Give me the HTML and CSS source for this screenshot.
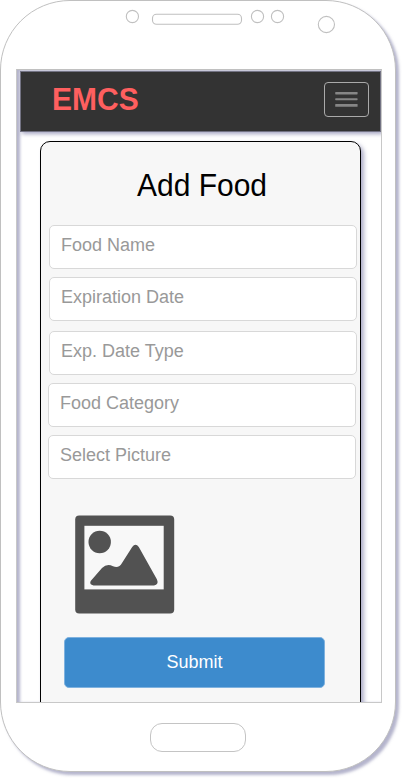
FILE: index.html
```html
<!DOCTYPE html>
<html lang="en">
<head>
<meta charset="utf-8">
<title>EMCS - Add Food</title>
<link rel="stylesheet" href="styles.css">
</head>
<body>
<div class="phone">
  <svg class="sensors" width="394" height="68" viewBox="0 0 394 68" fill="none" stroke="#c0c0c0" stroke-width="1.1" aria-hidden="true">
    <circle cx="131.4" cy="15.5" r="6.1"/>
    <rect x="151.5" y="13.3" width="89" height="10" rx="4"/>
    <circle cx="256.5" cy="15.5" r="6.1"/>
    <circle cx="276.5" cy="15.5" r="6.1"/>
    <circle cx="325.4" cy="23.5" r="8.1"/>
  </svg>
  <main class="screen">
    <nav class="navbar">
      <span class="brand">EMCS</span>
      <button class="toggle" type="button" aria-label="Menu">
        <svg width="24" height="18" viewBox="0 0 24 18" fill="#868686" aria-hidden="true">
          <rect x="0.2" y="0.9" width="22.4" height="2.5" rx="0.6"/>
          <rect x="0.2" y="7.2" width="22.4" height="2" rx="0.6"/>
          <rect x="0.2" y="13" width="22.4" height="2.8" rx="0.6"/>
        </svg>
      </button>
    </nav>
    <form class="card">
      <h1 class="title">Add Food</h1>
      <div class="field">Food Name</div>
      <div class="field">Expiration Date</div>
      <div class="field spaced">Exp. Date Type</div>
      <div class="field shifted">Food Category</div>
      <div class="field shifted">Select Picture</div>
      <svg class="picture" width="100" height="99" viewBox="0 0 100 99" aria-hidden="true">
        <rect x="0.2" y="0.5" width="99" height="98" rx="4" fill="#525252"/>
        <rect x="9.4" y="10.8" width="79.3" height="63.6" fill="#f8f8f8"/>
        <circle cx="24.7" cy="27" r="11.2" fill="#525252"/>
        <path d="M18.5 70.5 Q14 69.5 15.7 66 L27 53 Q32 48 38 51.2 Q44 53.5 47 48 L57.2 32 Q60.5 27.5 63.8 32 L82 64.5 Q84 69.5 79 70.5 Z" fill="#525252"/>
      </svg>
      <button class="submit" type="button">Submit</button>
    </form>
  </main>
  <div class="home"></div>
</div>
</body>
</html>
```
FILE: styles.css
```css
* {
  box-sizing: border-box;
}

body {
  margin: 0;
  min-height: 779px;
  background: #fff;
  font-family: "Liberation Sans", Arial, sans-serif;
}

.phone {
  width: 396px;
  height: 772px;
  border: 1px solid #c0c0c0;
  border-radius: 70px;
  background: #fff;
  box-shadow: 3px 3px 3px rgba(130, 130, 170, 0.6);
}

.sensors {
  display: block;
}

.screen {
  width: 366px;
  height: 634px;
  margin-left: 15px;
  padding: 1px 0 0 3px;
  border: 1px solid #c8c8c8;
  border-top-color: #c0c0c0;
  background: #fff;
  box-shadow: inset 3px 1px 3px rgba(130, 130, 170, 0.6);
  overflow: hidden;
}

.navbar {
  display: flex;
  justify-content: space-between;
  align-items: flex-start;
  width: 361px;
  height: 61px;
  padding: 10px 11px 0 31px;
  border: 1px solid #737383;
  background: #333;
  box-shadow: 2px 2px 4px rgba(130, 130, 170, 0.7);
}

.brand {
  margin-top: 3px;
  color: #ff5f5f;
  font-size: 30px;
  font-weight: bold;
  line-height: 30px;
  transform: scaleY(1.06);
  transform-origin: 0 25px;
}

.toggle {
  display: flex;
  justify-content: center;
  width: 45px;
  height: 35px;
  padding: 8px 0 0;
  border: 1px solid #aaa;
  border-radius: 4px;
  background: none;
}

.card {
  width: 321px;
  height: 590px;
  margin: 9px 0 0 20px;
  padding: 29px 0 0 8px;
  border: 1px solid #000;
  border-radius: 10px;
  background: #f7f7f7;
  box-shadow: 3px 3px 4px rgba(130, 130, 170, 0.65);
}

.title {
  width: 306px;
  margin: 0 0 24px;
  color: #000;
  font-size: 30px;
  font-weight: normal;
  line-height: 30px;
  text-align: center;
  transform: scaleY(1.05);
  transform-origin: 0 25px;
}

.field {
  width: 308px;
  height: 44px;
  margin-bottom: 8px;
  padding: 9px 11px;
  border: 1px solid #d8d8d8;
  border-radius: 5px;
  background: #fff;
  color: #999;
  font-size: 18px;
  line-height: 20px;
}

.spaced {
  margin-top: 10px;
}

.shifted {
  margin-left: -1px;
}

.picture {
  display: block;
  margin: 36px 0 0 26px;
}

.submit {
  display: block;
  width: 261px;
  height: 51px;
  margin: 23px 0 0 15px;
  padding: 0;
  border: 1px solid #7fb2df;
  border-radius: 5px;
  background: #3d8bcd;
  color: #fff;
  font-family: inherit;
  font-size: 18px;
}

.home {
  width: 96px;
  height: 29px;
  margin: 20px 0 0 149px;
  border: 1px solid #c4c4c4;
  border-radius: 12px;
}
```
